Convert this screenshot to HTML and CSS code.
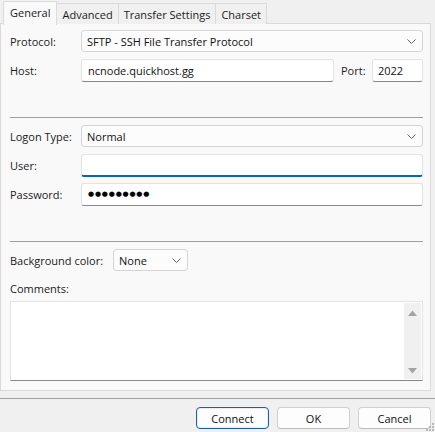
FILE: index.html
```html
<!DOCTYPE html>
<html>
<head>
<meta charset="utf-8">
<link rel="stylesheet" href="styles.css">
</head>
<body>
<div class="tabs">
  <div class="tab active">General</div>
  <div class="tab">Advanced</div>
  <div class="tab">Transfer Settings</div>
  <div class="tab">Charset</div>
</div>
<div class="panel">
  <div class="row">
    <span class="label">Protocol:</span>
    <div class="select grow"><span>SFTP - SSH File Transfer Protocol</span><svg class="chev" width="9" height="5" viewBox="0 0 9 5"><path d="M0.5 0.5 L4.5 4.5 L8.5 0.5" fill="none" stroke="#606060" stroke-width="1"/></svg></div>
  </div>
  <div class="row">
    <span class="label">Host:</span>
    <div class="input host">ncnode.quickhost.gg</div>
    <span class="label-port">Port:</span>
    <div class="input port">2022</div>
  </div>
  <div class="sep"></div>
  <div class="row">
    <span class="label">Logon Type:</span>
    <div class="select grow"><span>Normal</span><svg class="chev" width="9" height="5" viewBox="0 0 9 5"><path d="M0.5 0.5 L4.5 4.5 L8.5 0.5" fill="none" stroke="#606060" stroke-width="1"/></svg></div>
  </div>
  <div class="row">
    <span class="label">User:</span>
    <div class="input grow focused"></div>
  </div>
  <div class="row">
    <span class="label">Password:</span>
    <div class="input grow"><span class="dots">●●●●●●●●●</span></div>
  </div>
  <div class="sep"></div>
  <div class="row">
    <span class="label-bg">Background color:</span>
    <div class="select small"><span>None</span><svg class="chev" width="9" height="5" viewBox="0 0 9 5"><path d="M0.5 0.5 L4.5 4.5 L8.5 0.5" fill="none" stroke="#606060" stroke-width="1"/></svg></div>
  </div>
  <div class="comments-label">Comments:</div>
  <div class="textarea">
    <div class="scroll">
      <svg width="9" height="6" viewBox="0 0 9 6"><path d="M0 6 L4.5 0.5 L9 6 Z" fill="#a3a3a3"/></svg>
      <svg width="9" height="6" viewBox="0 0 9 6"><path d="M0 0 L4.5 5.5 L9 0 Z" fill="#a3a3a3"/></svg>
    </div>
  </div>
</div>
<div class="bottom-sep"></div>
<div class="buttons">
  <div class="btn default">Connect</div>
  <div class="btn">OK</div>
  <div class="btn">Cancel</div>
</div>
<div class="grip">
  <svg width="8" height="8" viewBox="0 0 8 8"><g fill="#b8b8b8"><rect x="6" y="0" width="2" height="2"/><rect x="3" y="3" width="2" height="2"/><rect x="6" y="3" width="2" height="2"/><rect x="0" y="6" width="2" height="2"/><rect x="3" y="6" width="2" height="2"/><rect x="6" y="6" width="2" height="2"/></g></svg>
</div>
</body>
</html>
```
FILE: styles.css
```css
* { box-sizing: border-box; }
html, body { margin: 0; padding: 0; }
body {
  width: 435px;
  height: 432px;
  background: #f0f0f0;
  font-family: "Open Sans", "Noto Sans", sans-serif;
  font-size: 11px;
  color: #1b1b1b;
  position: relative;
  overflow: hidden;
}
.tabs {
  display: flex;
  align-items: flex-end;
  height: 24px;
  padding-left: 3px;
  position: relative;
  z-index: 1;
}
.tab {
  height: 21px;
  padding: 0 5px;
  border: 1px solid #dadada;
  border-bottom: none;
  margin-left: -1px;
  background: #f0f0f0;
  display: flex;
  align-items: center;
  line-height: 1;
  padding-top: 1px;
}
.tab:first-child { margin-left: 0; }
.tab.active {
  height: 24px;
  background: #f9f9f9;
  padding: 0 6px 3px 6px;
  position: relative;
  z-index: 2;
  margin-bottom: -1px;
}
.panel {
  width: 431px;
  height: 368px;
  margin-top: -1px;
  background: #f9f9f9;
  border: 1px solid #dadada;
  padding: 6px 7px 0 9px;
  display: flex;
  flex-direction: column;
}
.row {
  display: flex;
  align-items: center;
  height: 22px;
  margin-bottom: 7px;
}
.label { width: 71px; flex: none; }
.label-port { width: 38px; padding-left: 7px; flex: none; white-space: nowrap; }
.label-bg { width: 103px; flex: none; }
.grow { flex: 1; }
.select {
  height: 22px;
  border: 1px solid #d5d5d5;
  border-radius: 3px;
  background: #fcfcfc;
  display: flex;
  align-items: center;
  justify-content: space-between;
  padding: 0 6px 0 5px;
  color: #111;
}
.select.small { width: 75px; }
.chev { display: block; margin-top: 1px; }
.input {
  height: 23px;
  border: 1px solid #e3e3e3;
  border-bottom: 1px solid #888;
  border-radius: 3px;
  background: #fff;
  display: flex;
  align-items: center;
  padding: 0 6px;
  color: #111;
}
.input.host { width: 253px; flex: none; }
.input.port { flex: 1; padding: 0 5px; }
.input.focused { border-bottom: 2px solid #0067c0; }
.dots { font-family: "DejaVu Sans", sans-serif; font-size: 7px; letter-spacing: 0.8px; color: #000; }
.sep {
  height: 1px;
  background: #a0a0a0;
  margin: 29px 0 7px 0;
}
.comments-label { margin-top: 2px; height: 18px; line-height: 18px; }
.textarea {
  margin-top: 3px;
  height: 80px;
  border: 1px solid #e3e3e3;
  border-bottom: 1px solid #888;
  background: #fff;
  display: flex;
  justify-content: flex-end;
  padding: 1px;
}
.scroll {
  width: 17px;
  background: #f0f0f0;
  display: flex;
  flex-direction: column;
  justify-content: space-between;
  align-items: center;
  padding: 7px 0 5px;
}
.scroll svg { display: block; }
.bottom-sep {
  height: 1px;
  background: #a0a0a0;
  margin-top: 7px;
}
.buttons {
  display: flex;
  justify-content: flex-end;
  gap: 8px;
  padding: 8px 4px 0 0;
}
.btn {
  width: 73px;
  height: 22px;
  border: 1px solid #d0d0d0;
  border-bottom-color: #bcbcbc;
  border-radius: 4px;
  background: #fdfdfd;
  display: flex;
  align-items: center;
  justify-content: center;
  color: #111;
}
.btn.default { border: 1px solid #1d5fa8; box-shadow: inset 0 0 0 1px #e8eef6; }
.grip { position: absolute; right: 1px; bottom: 1px; }
.grip svg { display: block; }
```
